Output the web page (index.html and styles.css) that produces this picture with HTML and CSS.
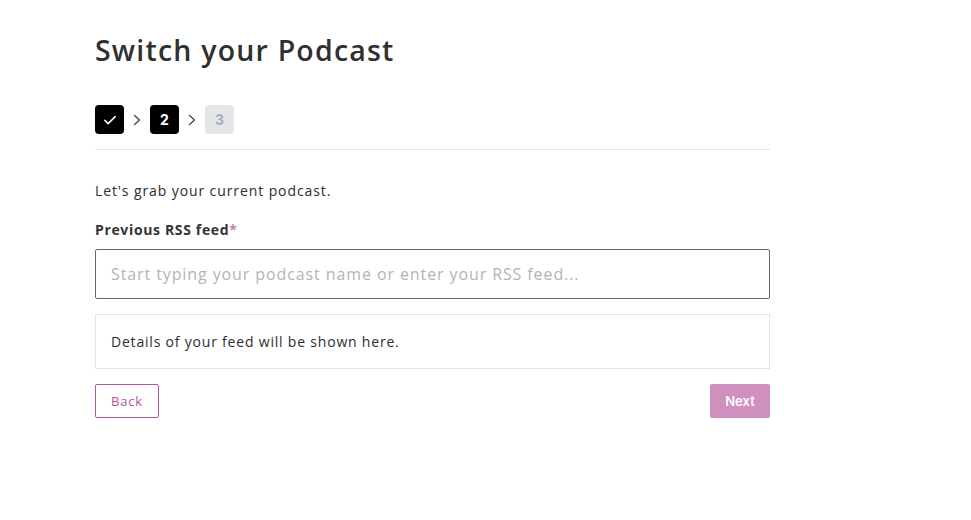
FILE: index.html
```html
<!DOCTYPE html>
<html lang="en">
<head>
<meta charset="utf-8">
<title>Switch your Podcast</title>
<link rel="stylesheet" href="styles.css">
</head>
<body>
<main class="page">
  <h1 class="title">Switch your Podcast</h1>
  <div class="steps">
    <span class="step step-done">
      <svg width="16" height="16" viewBox="0 0 16 16" fill="none" stroke="#fff" stroke-width="1.5" stroke-linecap="round" stroke-linejoin="round"><path d="M2.8 8.3l3.4 3.3L13.2 4.6"/></svg>
    </span>
    <svg class="chev" width="10" height="14" viewBox="0 0 10 14" fill="none" stroke="#444" stroke-width="1.3" stroke-linecap="round" stroke-linejoin="round"><path d="M2.5 2.5l5 4.5-5 4.5"/></svg>
    <span class="step step-active">2</span>
    <svg class="chev" width="10" height="14" viewBox="0 0 10 14" fill="none" stroke="#444" stroke-width="1.3" stroke-linecap="round" stroke-linejoin="round"><path d="M2.5 2.5l5 4.5-5 4.5"/></svg>
    <span class="step step-todo">3</span>
  </div>
  <hr class="divider">
  <p class="intro">Let's grab your current podcast.</p>
  <label class="label">Previous RSS feed<span class="req">*</span></label>
  <div class="input">Start typing your podcast name or enter your RSS feed...</div>
  <div class="details">Details of your feed will be shown here.</div>
  <div class="actions">
    <button class="btn btn-back">Back</button>
    <button class="btn btn-next">Next</button>
  </div>
</main>
</body>
</html>
```
FILE: styles.css
```css
* { box-sizing: border-box; }
body {
  margin: 0;
  background: #fff;
  font-family: "Open Sans", "DejaVu Sans", sans-serif;
  color: #2d2d2d;
}
.page {
  width: 675px;
  margin-left: 95px;
  padding-top: 30px;
  display: flex;
  flex-direction: column;
}
.title {
  margin: 0;
  font-size: 28.5px;
  font-weight: 600;
  line-height: 40px;
  color: #303030;
  letter-spacing: 1.2px;
}
.steps {
  margin-top: 35px;
  display: flex;
  align-items: center;
}
.step {
  width: 29px;
  height: 29px;
  border-radius: 4px;
  display: flex;
  align-items: center;
  justify-content: center;
  font-family: "Inter", "Liberation Sans", sans-serif;
  font-weight: 700;
  font-size: 14px;
}
.chev { margin: 0 8px; }
.step-done, .step-active { background: #000; color: #fff; }
.step-todo { background: #e5e6e9; color: #a7b0bd; }
.divider {
  margin: 15px 0 0 0;
  border: 0;
  border-top: 1px solid #e3e4e7;
  height: 0;
}
.intro {
  margin: 31px 0 0 0;
  font-size: 14px;
  line-height: 20px;
  color: #2d2d2d;
  letter-spacing: 0.9px;
}
.label {
  margin-top: 19px;
  font-size: 14px;
  font-weight: 700;
  line-height: 20px;
  color: #333;
  letter-spacing: 0.65px;
}
.req { color: #c77fa9; }
.input {
  margin-top: 9px;
  height: 50px;
  border: 1px solid #5e6b79;
  border-radius: 2px;
  padding: 0 15px;
  display: flex;
  align-items: center;
  font-size: 16px;
  color: #b1b4ba;
  letter-spacing: 0.9px;
}
.details {
  margin-top: 15px;
  height: 55px;
  border: 1px solid #e3e4e8;
  padding: 0 15px;
  display: flex;
  align-items: center;
  font-size: 14px;
  color: #2d2d2d;
  letter-spacing: 0.8px;
}
.actions {
  margin-top: 15px;
  display: flex;
  justify-content: space-between;
}
.btn {
  height: 34px;
  border-radius: 2px;
  font-size: 13px;
  padding: 0;
  cursor: pointer;
}
.btn-back {
  width: 64px;
  background: #fff;
  border: 1px solid #b6549a;
  color: #b6549a;
  font-family: "Open Sans", sans-serif;
  letter-spacing: 0.8px;
}
.btn-next {
  width: 60px;
  background: #cf90bf;
  border: 0;
  color: #fff;
  font-family: "Inter", "Liberation Sans", sans-serif;
  font-weight: 600;
}
```
